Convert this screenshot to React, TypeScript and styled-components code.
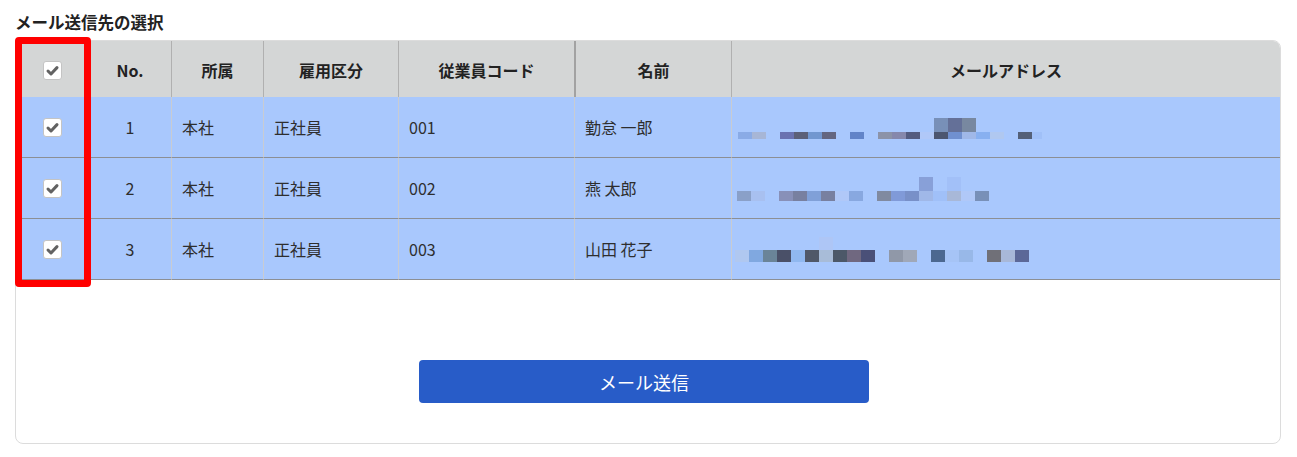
import React from "react";
import styled, { createGlobalStyle } from "styled-components";

const Global = createGlobalStyle`
  html, body { margin: 0; padding: 0; background: #ffffff; }
  body { font-family: "Noto Sans CJK JP", "Noto Sans", sans-serif; color: #333; }
`;

const Page = styled.div`
  padding: 10px 16px 0 15px;
  width: 1266px;
`;

const Title = styled.h2`
  margin: 0 0 6px 0;
  font-size: 16.5px;
  line-height: 24px;
  font-weight: 700;
  color: #222;
`;

const Wrap = styled.div`
  position: relative;
`;

const Card = styled.div`
  border: 1px solid #dcdcdc;
  border-radius: 8px;
  overflow: hidden;
  background: #fff;
`;

const Grid = styled.div`
  display: grid;
  grid-template-columns: 73px 82px 92px 135px 176px 157px 1fr;
`;

const HeadCell = styled.div<{ $sep?: boolean; $thick?: boolean }>`
  height: 56px;
  background: #d4d6d6;
  display: flex;
  align-items: center;
  justify-content: center;
  font-size: 16px;
  font-weight: 700;
  color: #222;
  box-sizing: border-box;
  border-left: ${(p) => (p.$sep ? (p.$thick ? "2px solid #a2a2a2" : "1px solid #b0b0b0") : "none")};
  padding-top: 2px;
`;

const BodyCell = styled.div<{ $sep?: boolean; $align?: "center" | "left"; $flush?: boolean }>`
  height: 61px;
  box-sizing: border-box;
  background: #a9c8fd;
  border-bottom: 1px solid #8c8f94;
  border-left: ${(p) => (p.$sep ? "1px solid #c9ccd2" : "none")};
  display: flex;
  align-items: center;
  justify-content: ${(p) => (p.$align === "center" ? "center" : "flex-start")};
  padding-left: ${(p) => (p.$flush ? "0" : p.$align === "center" ? "0" : "10px")};
  font-size: 16px;
  color: #2e2e2e;
  position: relative;
`;

const Box = styled.span`
  width: 19px;
  height: 19px;
  box-sizing: border-box;
  background: #fff;
  border: 1px solid #c4c4c4;
  border-radius: 3px;
  display: inline-flex;
  align-items: center;
  justify-content: center;
`;

const RedFrame = styled.div`
  position: absolute;
  left: 0;
  top: -3px;
  width: 76px;
  height: 250px;
  box-sizing: border-box;
  border: 7px solid #ff0000;
  border-radius: 4px;
  pointer-events: none;
`;

const Footer = styled.div`
  display: flex;
  justify-content: center;
  padding: 80px 8px 40px 0;
`;

const SendButton = styled.button`
  width: 450px;
  height: 43px;
  border: none;
  border-radius: 4px;
  background: #285cc8;
  color: #fff;
  font-family: "Noto Sans CJK JP", "Noto Sans", sans-serif;
  font-size: 18px;
  cursor: pointer;
`;

const Mosaic = styled.svg`
  display: block;
  position: absolute;
  left: 0;
  top: 0;
`;

const Check = () => (
  <Box>
    <svg width="15" height="15" viewBox="0 0 15 15">
      <polyline
        points="3,8 6,11 12,4.6"
        fill="none"
        stroke="#626262"
        strokeWidth="3"
        strokeLinecap="round"
        strokeLinejoin="round"
      />
    </svg>
  </Box>
);

type Cell = [number, number, number, string];

const mosaics: Cell[][] = [
  [
    [6, 35, 14, "#8aabe6"], [20, 35, 14, "#a7b6d6"],
    [48, 35, 14, "#6a72b0"], [62, 35, 14, "#5c6078"], [76, 35, 14, "#7297d0"], [90, 35, 14, "#646680"],
    [118, 35, 14, "#6284c8"],
    [146, 35, 14, "#8c93a8"], [160, 35, 14, "#8688ac"], [174, 35, 14, "#545c80"], [188, 35, 14, "#b0c8f8"],
    [202, 35, 14, "#4c5670"], [216, 35, 14, "#7090d0"], [230, 35, 14, "#a0b8e8"], [244, 35, 14, "#88b0f0"],
    [258, 35, 14, "#b0c8f0"], [286, 35, 14, "#546078"], [300, 35, 10, "#a0c0f8"],
  ],
  [
    [5, 33, 14, "#8aa0c8"], [19, 33, 14, "#a8c0f0"],
    [47, 33, 14, "#8890b8"], [61, 33, 14, "#7880a0"], [75, 33, 14, "#80a0d8"], [89, 33, 14, "#7880a0"],
    [103, 33, 14, "#b0c8f8"], [117, 33, 14, "#88a8e0"],
    [145, 33, 14, "#808aa0"], [159, 33, 14, "#809ad8"], [173, 33, 14, "#7890c8"], [187, 33, 14, "#a0b8e8"],
    [201, 33, 14, "#a0c0f8"], [215, 33, 14, "#a8b8d8"], [229, 33, 14, "#b0c8f8"], [243, 33, 14, "#7890b8"],
  ],
  [
    [3, 31, 14, "#b0c8f0"], [17, 31, 14, "#80a8e0"], [31, 31, 14, "#6a8498"], [45, 31, 14, "#4a5068"],
    [59, 31, 14, "#90b8f0"], [73, 31, 14, "#505868"], [87, 31, 14, "#a8bcd8"], [101, 31, 14, "#4c5868"],
    [115, 31, 14, "#706880"], [129, 31, 14, "#4a5078"],
    [157, 31, 14, "#9098a8"], [171, 31, 14, "#a0a8b8"],
    [199, 31, 14, "#4c6890"], [213, 31, 14, "#a6c4f6"], [227, 31, 14, "#98b8e8"],
    [255, 31, 14, "#707078"], [269, 31, 14, "#a8b8d8"], [283, 31, 14, "#5c6898"],
  ],
];

const mosaicHeights = [7, 10, 12];

const uppers: Cell[][] = [
  [[202, 21, 14, "#7890b8"], [216, 21, 14, "#647098"], [230, 21, 14, "#7888a0"]],
  [[187, 19, 14, "#88a0d8"], [215, 19, 14, "#a2c0f8"]],
  [[87, 18, 14, "#aec6f6"]],
];

const rows = [
  { no: "1", dept: "本社", type: "正社員", code: "001", name: "勤怠 一郎" },
  { no: "2", dept: "本社", type: "正社員", code: "002", name: "燕 太郎" },
  { no: "3", dept: "本社", type: "正社員", code: "003", name: "山田 花子" },
];

export default function App() {
  return (
    <>
      <Global />
      <Page>
        <Title>メール送信先の選択</Title>
        <Wrap>
          <Card>
            <Grid>
              <HeadCell><Check /></HeadCell>
              <HeadCell>No.</HeadCell>
              <HeadCell $sep>所属</HeadCell>
              <HeadCell $sep>雇用区分</HeadCell>
              <HeadCell $sep>従業員コード</HeadCell>
              <HeadCell $sep $thick>名前</HeadCell>
              <HeadCell $sep>メールアドレス</HeadCell>
              {rows.map((r, i) => (
                <React.Fragment key={r.no}>
                  <BodyCell $align="center"><Check /></BodyCell>
                  <BodyCell $align="center">{r.no}</BodyCell>
                  <BodyCell $sep>{r.dept}</BodyCell>
                  <BodyCell $sep>{r.type}</BodyCell>
                  <BodyCell $sep>{r.code}</BodyCell>
                  <BodyCell $sep>{r.name}</BodyCell>
                  <BodyCell $sep $flush>
                    <Mosaic width="320" height="60" viewBox="0 0 320 60">
                      {uppers[i].map(([x, y, w, c], k) => (
                        <rect key={"u" + k} x={x} y={y} width={w} height={14} fill={c} />
                      ))}
                      {mosaics[i].map(([x, y, w, c], k) => (
                        <rect key={k} x={x} y={y} width={w} height={mosaicHeights[i]} fill={c} />
                      ))}
                    </Mosaic>
                  </BodyCell>
                </React.Fragment>
              ))}
            </Grid>
            <Footer>
              <SendButton>メール送信</SendButton>
            </Footer>
          </Card>
          <RedFrame />
        </Wrap>
      </Page>
    </>
  );
}
